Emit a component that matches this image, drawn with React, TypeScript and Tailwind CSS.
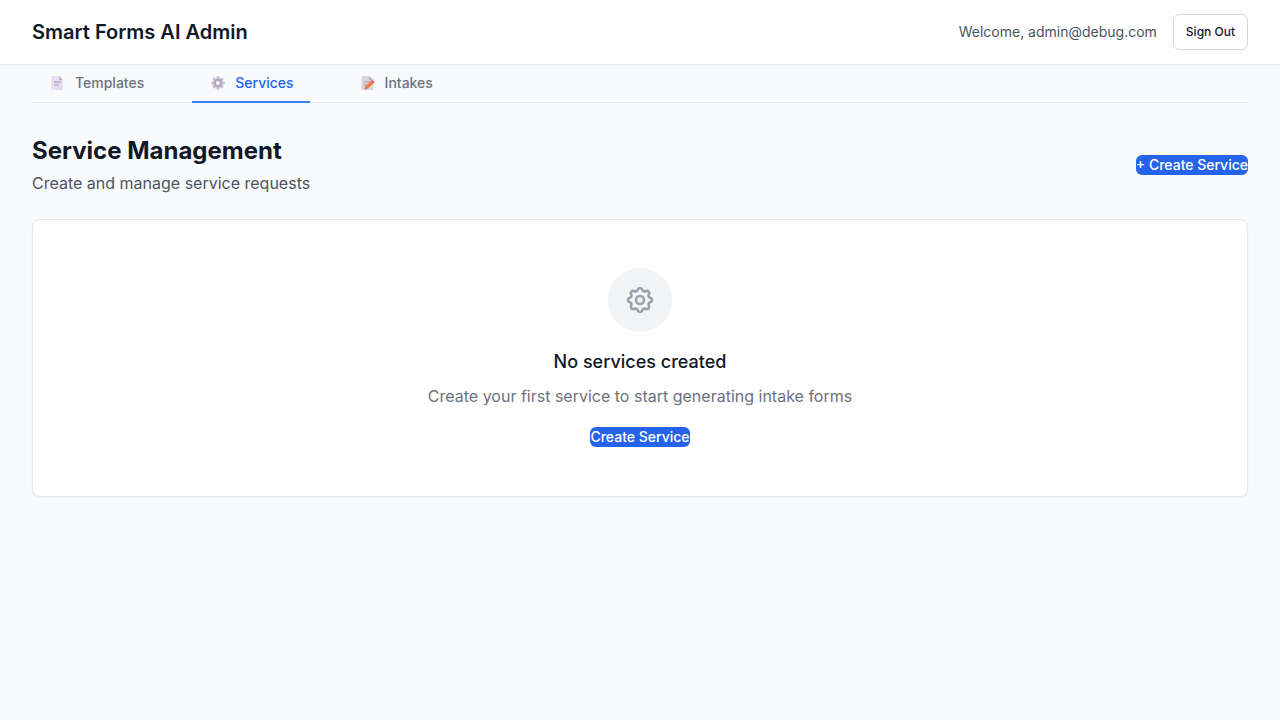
import type { ReactNode } from "react";

function DocumentIcon() {
  return (
    <svg viewBox="-1 0 19 16" className="h-4 w-[19px] shrink-0" aria-hidden="true">
      <path d="M2.500 1h7.500l4 4v10H2.500z" fill="#e6ddf1" />
      <path d="M10 1l4 4h-4z" fill="#bdb4c8" />
      <path d="M5 6.200h7v1.800H5zM5 9.300h5v1.500H5z" fill="#bbb1c5" />
    </svg>
  );
}

function GearIcon() {
  return (
    <svg viewBox="-1 0 19 16" className="h-4 w-[19px] shrink-0" aria-hidden="true">
      <g fill="#cfc3dc">
        <rect x="7.400" y="1.200" width="3.200" height="13.600" rx="0.800" />
        <rect x="7.400" y="1.200" width="3.200" height="13.600" rx="0.800" transform="rotate(45 9 8)" />
        <rect x="7.400" y="1.200" width="3.200" height="13.600" rx="0.800" transform="rotate(90 9 8)" />
        <rect x="7.400" y="1.200" width="3.200" height="13.600" rx="0.800" transform="rotate(135 9 8)" />
      </g>
      <circle cx="9" cy="8" r="3.300" fill="#f9fafb" stroke="#b3a5c1" strokeWidth="2.400" />
    </svg>
  );
}

function MemoIcon() {
  return (
    <svg viewBox="-1 0 19 16" className="h-4 w-[19px] shrink-0" aria-hidden="true">
      <path d="M2.500 1h7.500l4 4v10H2.500z" fill="#d9d2e2" />
      <path d="M10 1l4 4h-4z" fill="#b5adbe" />
      <path d="M5 6h6v1.500H5zM5 9h4v1.500H5z" fill="#b3aabd" />
      <path d="M5.500 14.500l1-3.500 5-4.500 2.400 2.600-5 4.500z" fill="#f5803e" />
      <path d="M11.500 6.500l1.400-1.200q.8-.4 1.600.4l.8.9q.6.9-.2 1.500l-1.200 1z" fill="#ec5b5f" />
      <path d="M5.500 14.500l1-3.500 2.400 2.600z" fill="#b77d68" />
    </svg>
  );
}

type Tab = { label: string; icon: ReactNode; active?: boolean };

const tabs: Tab[] = [
  { label: "Templates", icon: <DocumentIcon /> },
  { label: "Services", icon: <GearIcon />, active: true },
  { label: "Intakes", icon: <MemoIcon /> },
];

export default function App() {
  return (
    <div className="min-h-screen bg-[#f9fafb] font-['Inter',sans-serif] text-[#111827]">
      <header className="border-b border-gray-200 bg-white shadow-xs">
        <div className="flex h-16 items-center justify-between px-8">
          <h1 className="text-xl font-semibold">Smart Forms AI Admin</h1>
          <div className="flex items-center gap-4">
            <span className="text-sm text-[#4b5563]">Welcome, admin@debug.com</span>
            <button
              type="button"
              className="h-9 rounded-md border border-gray-300 bg-white px-3 text-xs font-medium"
            >
              Sign Out
            </button>
          </div>
        </div>
      </header>

      <div className="px-8">
        <nav className="flex gap-8 border-b border-gray-200" aria-label="Sections">
          {tabs.map((tab) => (
            <button
              key={tab.label}
              type="button"
              aria-current={tab.active ? "page" : undefined}
              className={
                tab.active
                  ? "-mb-px flex items-center gap-2 border-b-2 border-[#3b82f6] px-4 py-2 text-sm font-medium text-[#2563eb]"
                  : "-mb-px flex items-center gap-2 border-b-2 border-transparent px-4 py-2 text-sm font-medium text-[#6b7280]"
              }
            >
              {tab.icon}
              {tab.label}
            </button>
          ))}
        </nav>

        <main className="py-8">
          <div className="mb-6 flex items-center justify-between">
            <div>
              <h2 className="text-2xl font-bold">Service Management</h2>
              <p className="mt-1 text-[#4b5563]">Create and manage service requests</p>
            </div>
            <button
              type="button"
              className="inline-flex items-center rounded-md bg-[#2563eb] text-sm font-medium text-white"
            >
              + Create Service
            </button>
          </div>

          <section className="rounded-lg border border-gray-200 bg-white p-12 text-center shadow-xs">
            <div className="mx-auto mb-4 flex size-16 items-center justify-center rounded-full bg-gray-100">
              <svg
                viewBox="0 0 24 24"
                className="size-8 text-[#9ca3af]"
                fill="none"
                stroke="currentColor"
                strokeWidth="2"
                strokeLinecap="round"
                strokeLinejoin="round"
                aria-hidden="true"
              >
                <path d="M10.325 4.317c.426-1.756 2.924-1.756 3.350 0a1.724 1.724 0 002.573 1.066c1.543-.94 3.310.826 2.370 2.370a1.724 1.724 0 001.065 2.572c1.756.426 1.756 2.924 0 3.350a1.724 1.724 0 00-1.066 2.573c.94 1.543-.826 3.310-2.370 2.370a1.724 1.724 0 00-2.572 1.065c-.426 1.756-2.924 1.756-3.350 0a1.724 1.724 0 00-2.573-1.066c-1.543.94-3.310-.826-2.370-2.370a1.724 1.724 0 00-1.065-2.572c-1.756-.426-1.756-2.924 0-3.350a1.724 1.724 0 001.066-2.573c-.94-1.543.826-3.310 2.370-2.370.996.608 2.296.070 2.572-1.065z" />
                <path d="M15 12a3 3 0 11-6 0 3 3 0 016 0z" />
              </svg>
            </div>
            <h3 className="mb-2 text-lg font-medium">No services created</h3>
            <p className="mb-4 text-[#6b7280]">
              Create your first service to start generating intake forms
            </p>
            <div>
              <button
                type="button"
                className="inline-flex items-center rounded-md bg-[#2563eb] text-sm font-medium text-white"
              >
                Create Service
              </button>
            </div>
          </section>
        </main>
      </div>
    </div>
  );
}
